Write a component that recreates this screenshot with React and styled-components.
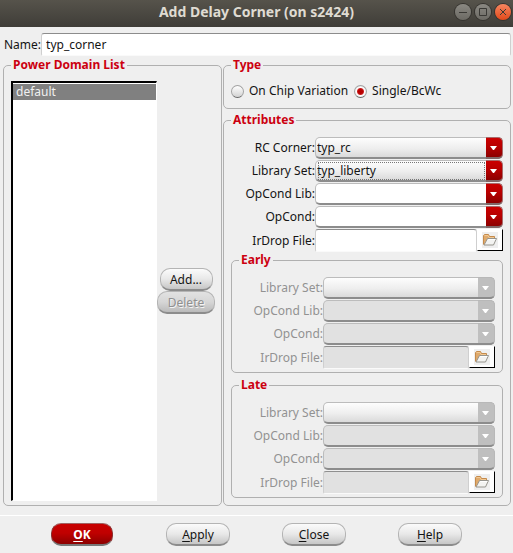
import React, { useId, useState } from "react";
import styled, { createGlobalStyle, css } from "styled-components";

const Global = createGlobalStyle`
  *, *::before, *::after { box-sizing: border-box; }
  html { height: 100%; background: #efefef; }
  body {
    margin: 0;
    color: #141414;
    font: 12px/16px "Noto Sans", "Open Sans", sans-serif;
  }
  button, input, select { font: inherit; color: inherit; margin: 0; }
`;

const Dialog = styled.form`
  display: flex;
  flex-direction: column;
  background: #efefef;
`;

const TitleBar = styled.header`
  display: grid;
  grid-template-columns: 1fr auto 1fr;
  align-items: center;
  height: 27px;
  padding: 0 2px 3px;
  background: linear-gradient(#56534b, #3f3d38);
`;

const Title = styled.h1`
  grid-column: 2;
  margin: 0;
  color: #dfdbd2;
  font-size: 14px;
  line-height: 24px;
  font-weight: 700;
`;

const WindowControls = styled.div`
  display: flex;
  justify-content: flex-end;
  gap: 4px;
`;

const WindowButton = styled.button`
  display: flex;
  width: 16px;
  height: 16px;
  padding: 0;
  border: 0;
  border-radius: 50%;
  color: #3a3935;
  background: ${(p) =>
    p.$close
      ? "linear-gradient(#f58660, #e2491a)"
      : "linear-gradient(#8a8882, #6c6a64)"};
  box-shadow: 0 0 0 1px #35332f;
`;

const NameRow = styled.div`
  display: flex;
  align-items: center;
  padding: 6px 2px 1px 4px;
`;

const TextInput = styled.input`
  flex: 1;
  min-width: 0;
  height: 23px;
  padding: 0 4px;
  border: 1px solid #cfcfcf;
  border-top-color: #8c8c8c;
  border-bottom-color: #fafafa;
  border-radius: 3px 3px 2px 2px;
  background: #fff;
  outline: none;

  &:disabled { background: #e1e1e1; border-color: #8f8f8f #cfcfcf #fafafa; }
`;

const Columns = styled.main`
  display: grid;
  grid-template-columns: minmax(0, 219fr) minmax(0, 288fr);
  gap: 1px;
  padding: 0 2px 0 3px;
`;

const RightColumn = styled.div`
  display: flex;
  flex-direction: column;
  gap: 3px;
`;

const Group = styled.fieldset`
  min-width: 0;
  margin: 0;
  padding: ${(p) => p.$pad || "9px 7px 3px"};
  border: 1px solid #b0b0b0;
  border-radius: 5px;
`;

const Legend = styled.legend`
  padding: 0 2px;
  height: 16px;
  color: #cc0010;
  font-weight: 700;
`;

const DomainBody = styled.div`
  display: grid;
  grid-template-columns: minmax(0, 1fr) 58px;
  height: 100%;
`;

const DomainList = styled.ul`
  margin: 0;
  padding: 1px 0;
  list-style: none;
  background: #fff;
  border: 1px solid #fff;
  border-top: 2px solid #000;
  border-left: 2px solid #000;
  outline: none;
`;

const DomainItem = styled.li`
  padding: 0 3px;
  height: 16px;
  line-height: 16px;
  color: #f0f0f0;
  background: #808080;
`;

const DomainActions = styled.div`
  display: flex;
  flex-direction: column;
  align-items: center;
  justify-content: center;
`;

const PushButton = styled.button`
  height: 23px;
  min-width: ${(p) => p.$width || "53px"};
  padding: 0 8px;
  line-height: 19px;
  border: 1px solid #b4b4b4;
  border-bottom: 2px solid #8c8c8c;
  border-radius: 10px;
  background: linear-gradient(#fbfbfb, #e8e8e8 50%, #c6c6c6);

  ${(p) =>
    p.$primary &&
    css`
      color: #fff;
      font-weight: 700;
      border-color: #a06060 #8a3030 #777;
      background: linear-gradient(#c80000, #c00000 45%, #8c0000);
    `}

  &:disabled {
    color: #909090;
    text-shadow: 1px 1px 0 #f4f4f4;
    background: linear-gradient(#e2e2e2, #d6d6d6 50%, #bababa);
  }
`;

const Mnemonic = styled.span`
  text-decoration: underline 1px;
  text-underline-offset: 2px;
  text-decoration-skip-ink: none;
`;

const RadioRow = styled.div`
  display: flex;
  gap: 6px;
  height: 24px;
  align-items: center;
`;

const RadioLabel = styled.label`
  display: flex;
  align-items: center;
  gap: 5px;
  white-space: nowrap;
`;

const Radio = styled.input`
  appearance: none;
  width: 13px;
  height: 13px;
  border-radius: 50%;
  border: 1px solid #a2a2a2;
  border-bottom-color: #666;
  background: linear-gradient(#fff, #d2d2d2);

  &:checked {
    background: radial-gradient(circle, #b80000 0 2px, #c82020 3px, #fff 4px, #e2e2e2 6px);
  }
`;

const Fields = styled.div`
  display: grid;
  grid-template-columns: 84px minmax(0, 1fr);
  row-gap: 1px;
  align-items: center;
  color: ${(p) => (p.$disabled ? "#929292" : "#141414")};
`;

const FieldLabel = styled.label`
  text-align: right;
  white-space: nowrap;
  line-height: 22px;
`;

const Combo = styled.div`
  display: grid;
  grid-template-columns: minmax(0, 1fr) 17px;
  height: 22px;
`;

const ComboSelect = styled.select`
  grid-area: 1 / 1 / 2 / 3;
  appearance: none;
  width: 100%;
  height: 22px;
  padding: 0 18px 0 1px;
  line-height: 18px;
  border: 1px solid #bcbcbc;
  border-bottom: 2px solid #8c8c8c;
  border-radius: 5px;
  background: ${(p) =>
    p.$editable ? "#fff" : "linear-gradient(#fdfdfd, #eee 55%, #dadada)"};
  outline: none;

  &:disabled {
    opacity: 1;
    ${(p) => p.$editable && "background: #e1e1e1;"}
  }
`;

const ComboArrow = styled.span`
  grid-area: 1 / 2;
  display: flex;
  align-items: center;
  justify-content: center;
  pointer-events: none;
  border-radius: 0 5px 5px 0;
  border: 1px solid ${(p) => (p.$disabled ? "#b8b8b8" : "#a86a6a")};
  border-left: 0;
  border-bottom: 2px solid ${(p) => (p.$disabled ? "#8c8c8c" : "#806868")};
  background: ${(p) =>
    p.$disabled ? "#bfbfbf" : "linear-gradient(#ca0000, #b80000 45%, #8c0000)"};
`;

const FocusRing = styled.span`
  grid-area: 1 / 1;
  margin: 2px 1px 2px 3px;
  border: 1px dotted #777;
  pointer-events: none;
`;

const FileRow = styled.div`
  display: flex;
  height: 23px;
`;

const BrowseButton = styled.button`
  display: flex;
  align-items: center;
  justify-content: center;
  width: 26px;
  height: 22px;
  padding: 0;
  background: #fff;
  border: 1px solid #fff;
  border-right-color: #000;
  border-bottom-color: #000;
`;

const Footer = styled.footer`
  display: grid;
  grid-template-columns: repeat(4, 1fr);
  justify-items: center;
  margin-top: 9px;
  padding: 7px 25px 8px 24px;
  border-top: 1px solid #fff;
`;

function FolderIcon() {
  return (
    <svg width="16" height="16" viewBox="0 0 16 16" aria-hidden="true">
      <path fill="#efefef" d="M0 0h16v16H0z" />
      <path d="M1.5 12.5V3.5l1-1h4l1 2h5v3.5" fill="#dfaa6c" stroke="#c58b4c" />
      <path d="M2.5 3.5h3.5l1 2h5" fill="none" stroke="#f2c994" />
      <path d="M2 13 5.5 6.5h9L11.5 13z" fill="#f3f3f1" stroke="#96948d" />
      <path d="M6.3 7.5h7" stroke="#fff" />
    </svg>
  );
}

function ArrowIcon() {
  return (
    <svg width="8" height="4" viewBox="0 0 8 4" aria-hidden="true">
      <path d="M0 0h7L4 4H3z" fill="#fff" />
    </svg>
  );
}

function ComboField({ label, value, editable, disabled, focused }) {
  const id = useId();
  return (
    <>
      <FieldLabel htmlFor={id}>{label}:</FieldLabel>
      <Combo>
        <ComboSelect
          id={id}
          $editable={editable}
          disabled={disabled}
          defaultValue={value || ""}
        >
          <option value={value || ""}>{value || ""}</option>
        </ComboSelect>
        {focused && <FocusRing />}
        <ComboArrow $disabled={disabled}>
          <ArrowIcon />
        </ComboArrow>
      </Combo>
    </>
  );
}

function FileField({ label, disabled }) {
  const id = useId();
  return (
    <>
      <FieldLabel htmlFor={id}>{label}:</FieldLabel>
      <FileRow>
        <TextInput id={id} disabled={disabled} />
        <BrowseButton type="button" aria-label="Browse">
          <FolderIcon />
        </BrowseButton>
      </FileRow>
    </>
  );
}

function TimingGroup({ title }) {
  return (
    <Group>
      <Legend>{title}</Legend>
      <Fields $disabled>
        <ComboField label="Library Set" disabled />
        <ComboField label="OpCond Lib" editable disabled />
        <ComboField label="OpCond" editable disabled />
        <FileField label="IrDrop File" disabled />
      </Fields>
    </Group>
  );
}

const TimingStack = styled.div`
  display: flex;
  flex-direction: column;
  gap: 4px;
`;

export default function App() {
  const [name, setName] = useState("typ_corner");
  const [type, setType] = useState("single");
  return (
    <>
      <Global />
      <Dialog onSubmit={(e) => e.preventDefault()}>
        <TitleBar>
          <Title>Add Delay Corner (on s2424)</Title>
          <WindowControls>
            <WindowButton type="button" aria-label="Minimize">
              <svg width="16" height="16" viewBox="0 0 16 16">
                <path d="M4 8.5h8" stroke="currentColor" />
              </svg>
            </WindowButton>
            <WindowButton type="button" aria-label="Maximize">
              <svg width="16" height="16" viewBox="0 0 16 16">
                <path d="M4.5 4.5h7v7h-7z" fill="none" stroke="currentColor" />
              </svg>
            </WindowButton>
            <WindowButton type="button" aria-label="Close window" $close>
              <svg width="16" height="16" viewBox="0 0 16 16">
                <path d="m5 5 6 6m0-6-6 6" stroke="currentColor" />
              </svg>
            </WindowButton>
          </WindowControls>
        </TitleBar>

        <NameRow>
          <label htmlFor="corner-name">Name:</label>
          <TextInput
            id="corner-name"
            value={name}
            onChange={(e) => setName(e.target.value)}
          />
        </NameRow>

        <Columns>
          <Group $pad="8px 6px 4px 7px">
            <Legend>Power Domain List</Legend>
            <DomainBody>
              <DomainList role="listbox" aria-label="Power domains" tabIndex={0}>
                <DomainItem role="option" aria-selected="true">
                  default
                </DomainItem>
              </DomainList>
              <DomainActions>
                <PushButton type="button">Add...</PushButton>
                <PushButton type="button" disabled $width="58px">
                  Delete
                </PushButton>
              </DomainActions>
            </DomainBody>
          </Group>

          <RightColumn>
            <Group $pad="6px 7px 5px">
              <Legend>Type</Legend>
              <RadioRow>
                <RadioLabel>
                  <Radio
                    type="radio"
                    name="type"
                    checked={type === "ocv"}
                    onChange={() => setType("ocv")}
                  />
                  On Chip Variation
                </RadioLabel>
                <RadioLabel>
                  <Radio
                    type="radio"
                    name="type"
                    checked={type === "single"}
                    onChange={() => setType("single")}
                  />
                  Single/BcWc
                </RadioLabel>
              </RadioRow>
            </Group>

            <Group $pad="9px 7px 7px">
              <Legend>Attributes</Legend>
              <Fields>
                <ComboField label="RC Corner" value="typ_rc" />
                <ComboField label="Library Set" value="typ_liberty" focused />
                <ComboField label="OpCond Lib" editable />
                <ComboField label="OpCond" editable />
                <FileField label="IrDrop File" />
              </Fields>
              <TimingStack>
                <TimingGroup title="Early" />
                <TimingGroup title="Late" />
              </TimingStack>
            </Group>
          </RightColumn>
        </Columns>

        <Footer>
          <PushButton type="submit" $primary $width="62px">
            <Mnemonic>O</Mnemonic>K
          </PushButton>
          <PushButton type="button" $width="64px">
            <Mnemonic>A</Mnemonic>pply
          </PushButton>
          <PushButton type="button" $width="64px">
            <Mnemonic>C</Mnemonic>lose
          </PushButton>
          <PushButton type="button" $width="64px">
            <Mnemonic>H</Mnemonic>elp
          </PushButton>
        </Footer>
      </Dialog>
    </>
  );
}
